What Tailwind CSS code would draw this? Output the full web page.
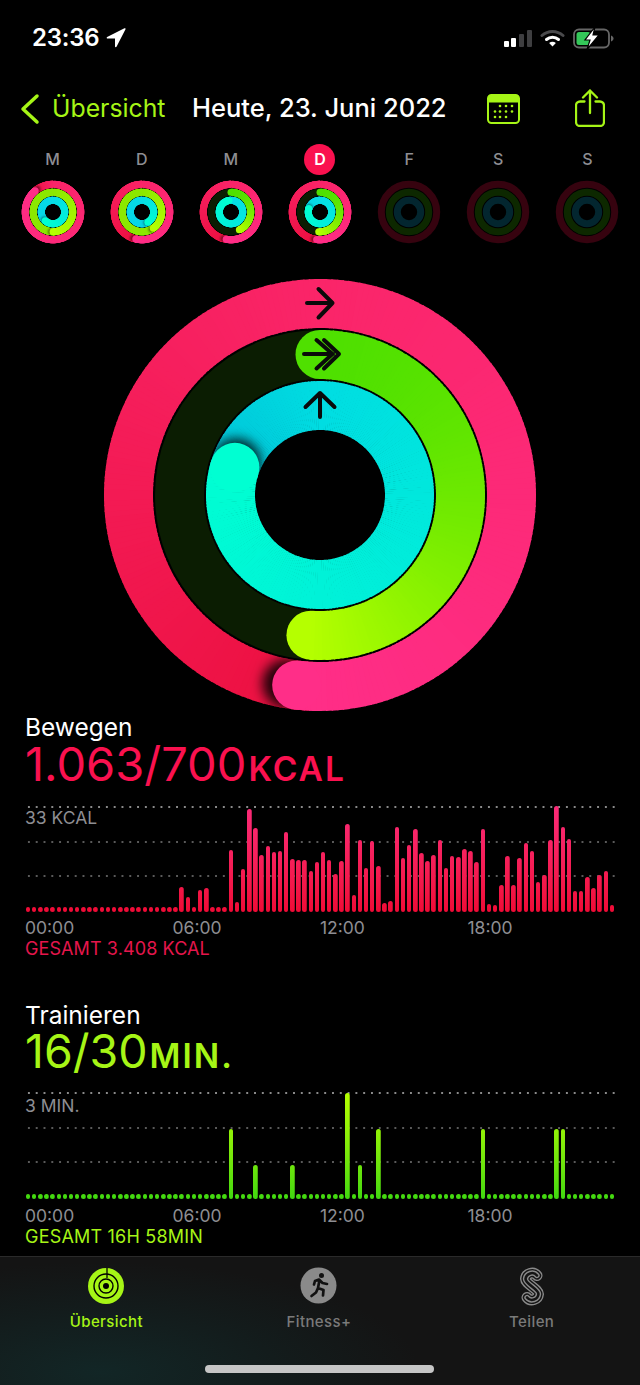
<!DOCTYPE html>
<html lang="de">
<head>
    <meta charset="UTF-8">
    <meta name="viewport" content="width=device-width, initial-scale=1.0">
    <title>Aktivität</title>
    <script src="https://cdn.jsdelivr.net/npm/@tailwindcss/browser@4"></script>
</head>
<body class="bg-black text-white font-['Inter',sans-serif] w-[640px] h-[1385px] overflow-hidden flex flex-col">

    <!-- Statusleiste -->
    <div class="h-[76px] shrink-0 flex items-center justify-between pl-[32px] pr-[26px]">
        <div class="flex items-center gap-[6px]">
            <span class="text-[24px] font-semibold tracking-[-0.2px]">23:36</span>
            <svg width="20" height="20" viewBox="0 0 20 20"><path d="M18.800 1 1.500 9.800h8.300v8.700z" fill="#fff" stroke="#fff" stroke-width="1.600" stroke-linejoin="round"/></svg>
        </div>
        <div class="flex items-center gap-[8px]">
            <div class="flex items-end gap-[2.500px] h-[18px]">
                <div class="w-[5px] h-[6px] rounded-[1px] bg-white"></div>
                <div class="w-[5px] h-[9px] rounded-[1px] bg-white"></div>
                <div class="w-[5.500px] h-[13px] rounded-[1px] bg-[#3e3e40]"></div>
                <div class="w-[5.500px] h-[17px] rounded-[1px] bg-[#3e3e40]"></div>
            </div>
            <svg width="25" height="18" viewBox="0 0 25 18" fill="none" stroke-linecap="round">
                <path d="M2 6.500C8 1 17 1 23 6.500" stroke="#4a4a4c" stroke-width="3"/>
                <path d="M6.500 10.500C10 7.500 15 7.500 18.500 10.500" stroke="#fff" stroke-width="3"/>
                <path d="M12.500 17.500l-3.400-3.600c2-1.500 4.800-1.500 6.800 0z" fill="#fff"/>
            </svg>
            <svg width="41" height="23" viewBox="0 0 41 23">
                <rect x="1" y="2.500" width="35" height="18" rx="5" fill="none" stroke="#666" stroke-width="1.800"/>
                <rect x="3.500" y="5" width="14" height="13" rx="2.500" fill="#34c759"/>
                <path d="M38 8.500v6c1.500-.5 2.500-1.700 2.500-3s-1-2.500-2.500-3z" fill="#666"/>
                <path d="M22 0 12 13h5l-3 9.500L26 8h-6z" fill="#fff" stroke="#000" stroke-width="1.200"/>
            </svg>
        </div>
    </div>

    <!-- Navigation -->
    <div class="h-[64px] shrink-0 flex items-center pl-[20px] pr-[35px] pt-[1px]">
        <svg width="20" height="32" viewBox="0 0 20 32" fill="none" stroke="#a6f516" stroke-width="3.500" stroke-linecap="round" stroke-linejoin="round"><path d="M17 3 3 16l14 13"/></svg>
        <span class="ml-[12px] w-[140px] text-[24.800px] text-[#a6f516]">Übersicht</span>
        <span class="text-[25.500px] font-medium whitespace-nowrap">Heute, 23. Juni 2022</span>
        <svg class="ml-[40px] shrink-0" width="33" height="30" viewBox="0 0 33 30">
            <rect x="1" y="1" width="31" height="28" rx="3.500" fill="none" stroke="#a6f516" stroke-width="2"/>
            <path d="M1 8.500V4.500C1 2.500 2.500 1 4.500 1h24C30.500 1 32 2.500 32 4.500V8.500z" fill="#a6f516"/>
            <g fill="#a6f516">
                <circle cx="13" cy="12" r="1.300"/><circle cx="19" cy="12" r="1.300"/><circle cx="25" cy="12" r="1.300"/>
                <circle cx="8" cy="17.500" r="1.300"/><circle cx="13" cy="17.500" r="1.300"/><circle cx="19" cy="17.500" r="1.300"/><circle cx="25" cy="17.500" r="1.300"/>
                <circle cx="8" cy="23" r="1.300"/><circle cx="13" cy="23" r="1.300"/><circle cx="19" cy="23" r="1.300"/>
            </g>
        </svg>
        <svg class="ml-auto shrink-0 -translate-y-[1px]" width="30" height="38" viewBox="0 0 30 38" fill="none" stroke="#a6f516" stroke-width="2.300" stroke-linecap="round" stroke-linejoin="round">
            <path d="M9.500 12.500H5c-2.200 0-4 1.800-4 4V33c0 2.200 1.800 4 4 4h20c2.200 0 4-1.800 4-4V16.500c0-2.200-1.800-4-4-4h-4.500"/>
            <path d="M15 24V1.500M8 8.500 15 1.500 22 8.500"/>
        </svg>
    </div>

    <!-- Wochentage -->
    <div class="shrink-0 grid grid-cols-7 px-[8px]">
        <div class="h-[38px] flex items-center justify-center text-[16px] font-medium text-[#8e8e93]">M</div>
        <div class="h-[38px] flex items-center justify-center text-[16px] font-medium text-[#8e8e93]">D</div>
        <div class="h-[38px] flex items-center justify-center text-[16px] font-medium text-[#8e8e93]">M</div>
        <div class="h-[38px] flex items-center justify-center"><span class="w-[31px] h-[31px] rounded-full bg-[#fa114f] flex items-center justify-center text-[16px] font-semibold">D</span></div>
        <div class="h-[38px] flex items-center justify-center text-[16px] font-medium text-[#8e8e93]">F</div>
        <div class="h-[38px] flex items-center justify-center text-[16px] font-medium text-[#8e8e93]">S</div>
        <div class="h-[38px] flex items-center justify-center text-[16px] font-medium text-[#8e8e93]">S</div>
    </div>
    <div class="shrink-0 grid grid-cols-7 px-[8px] mt-[2px]" id="week-rings"></div>

    <!-- Grosse Ringe -->
    <div class="shrink-0 flex justify-center mt-[34px]">
        <svg id="big-rings" width="434" height="434" viewBox="-217 -217 434 434">
            <defs>
                <filter id="cap-blur" x="-50%" y="-50%" width="200%" height="200%"><feGaussianBlur stdDeviation="6"/></filter>
                <filter id="cap-blur-small" x="-80%" y="-80%" width="260%" height="260%"><feGaussianBlur stdDeviation="0.8"/></filter>
            </defs>
        </svg>
    </div>

    <!-- Bewegen -->
    <section class="shrink-0 px-[25px]">
        <div class="h-[30px] flex items-center text-[24.500px] leading-[28px]">Bewegen</div>
        <div class="h-[44px] flex items-baseline text-[#fa114f] text-[47px] leading-[44px]">1.063/700<span class="ml-[2px] text-[33.500px] font-semibold tracking-[2px]">KCAL</span></div>
        <div class="relative h-[106px] mt-[20px]" id="move-chart">
            <div class="absolute inset-x-0 top-0 h-[2px] bg-[radial-gradient(circle,#8a8a8a_0.9px,transparent_1px)] bg-[length:7.8px_2px]"></div>
            <div class="absolute inset-x-0 top-[35px] h-[2px] bg-[radial-gradient(circle,#5a5a5a_0.8px,transparent_1px)] bg-[length:7.8px_2px]"></div>
            <div class="absolute inset-x-0 top-[69px] h-[2px] bg-[radial-gradient(circle,#5a5a5a_0.8px,transparent_1px)] bg-[length:7.8px_2px]"></div>
            <span class="absolute left-0 top-[3px] text-[17.500px] leading-[18px] text-[#8e8e93]">33 KCAL</span>
            <div class="absolute inset-0 grid grid-cols-[repeat(96,1fr)] items-end" id="move-bars"></div>
        </div>
        <div class="grid grid-cols-4 h-[26px] mt-[3px] items-center text-[17.500px] leading-[22px] text-[#8e8e93]"><span>00:00</span><span>06:00</span><span>12:00</span><span>18:00</span></div>
        <div class="h-[18px] -mt-[1px] flex items-center text-[18px] leading-[18px] tracking-[0.1px] text-[#e5164c]">GESAMT 3.408 KCAL</div>
    </section>

    <!-- Trainieren -->
    <section class="shrink-0 px-[25px] mt-[41px]">
        <div class="h-[30px] pt-[2px] flex items-center text-[24.500px] leading-[26px]">Trainieren</div>
        <div class="h-[44px] flex items-baseline text-[#a6f516] text-[46.500px] leading-[44px]">16/30<span class="ml-[2px] text-[33.500px] font-semibold tracking-[2px]">MIN.</span></div>
        <div class="relative h-[107px] mt-[19px]" id="exercise-chart">
            <div class="absolute inset-x-0 top-0 h-[2px] bg-[radial-gradient(circle,#8a8a8a_0.9px,transparent_1px)] bg-[length:7.8px_2px]"></div>
            <div class="absolute inset-x-0 top-[35px] h-[2px] bg-[radial-gradient(circle,#5a5a5a_0.8px,transparent_1px)] bg-[length:7.8px_2px]"></div>
            <div class="absolute inset-x-0 top-[69px] h-[2px] bg-[radial-gradient(circle,#5a5a5a_0.8px,transparent_1px)] bg-[length:7.8px_2px]"></div>
            <span class="absolute left-0 top-[5px] text-[17.500px] leading-[18px] text-[#8e8e93]">3 MIN.</span>
            <div class="absolute inset-0 grid grid-cols-[repeat(96,1fr)] items-end" id="exercise-bars"></div>
        </div>
        <div class="grid grid-cols-4 h-[26px] mt-[4px] items-center text-[17.500px] leading-[22px] text-[#8e8e93]"><span>00:00</span><span>06:00</span><span>12:00</span><span>18:00</span></div>
        <div class="h-[18px] -mt-[1px] flex items-center text-[18px] leading-[18px] tracking-[0.2px] text-[#a6f516]">GESAMT 16H 58MIN</div>
    </section>

    <!-- Tab-Leiste -->
    <nav class="relative mt-auto h-[129px] shrink-0 border-t border-[#2a2a2a] bg-[#141414] bg-[radial-gradient(ellipse_320px_110px_at_100px_115px,#122626,#141414)] grid grid-cols-3 pr-[2px]">
        <div class="flex flex-col items-center pt-[10px]">
            <svg width="38" height="38" viewBox="0 0 38 38">
                <circle cx="19" cy="19" r="18" fill="#a6f516"/>
                <g fill="none" stroke="#000" stroke-width="1.400">
                    <circle cx="19" cy="19" r="12"/>
                    <circle cx="19" cy="19" r="7"/>
                </g>
                <circle cx="19" cy="19" r="3" fill="#000"/>
                <path d="M20 1v10" stroke="#000" stroke-width="1.300"/>
            </svg>
            <span class="mt-[6px] text-[15px] font-medium tracking-[0.4px] text-[#a6f516]">Übersicht</span>
        </div>
        <div class="flex flex-col items-center pt-[10px]">
            <svg width="37" height="37" viewBox="0 0 37 37">
                <circle cx="18.500" cy="18.500" r="18" fill="#8a8a8a"/>
                <circle cx="21.500" cy="8.500" r="2.500" fill="#111"/>
                <path d="M14 17.500 15 14l4-1.500 3.500 3.500 4.500 1M19.500 13l-1.500 8 5.500 2-.5 5.500M18 21l-2 4.500-4.500 3.500" fill="none" stroke="#111" stroke-width="2.700" stroke-linecap="round" stroke-linejoin="round"/>
            </svg>
            <span class="mt-[7px] text-[15px] font-medium tracking-[0.4px] text-[#7a7a7a]">Fitness+</span>
        </div>
        <div class="flex flex-col items-center pt-[10px]">
            <svg width="24" height="39" viewBox="0 0 24 39" fill="none" stroke-linecap="round">
                <path d="M17 8.500A6.500 6.500 0 0 0 5.500 12C5.500 17 18.500 22 18.500 27A6.500 6.500 0 0 1 7 30.500" stroke="#8a8a8a" stroke-width="11"/>
                <path d="M17 8.500A6.500 6.500 0 0 0 5.500 12C5.500 17 18.500 22 18.500 27A6.500 6.500 0 0 1 7 30.500" stroke="#141414" stroke-width="8.200"/>
                <path d="M17 8.500A6.500 6.500 0 0 0 5.500 12C5.500 17 18.500 22 18.500 27A6.500 6.500 0 0 1 7 30.500" stroke="#8a8a8a" stroke-width="5.400"/>
                <path d="M17 8.500A6.500 6.500 0 0 0 5.500 12C5.500 17 18.500 22 18.500 27A6.500 6.500 0 0 1 7 30.500" stroke="#141414" stroke-width="2.600"/>
            </svg>
            <span class="mt-[5px] text-[15px] font-medium tracking-[0.4px] text-[#7a7a7a]">Teilen</span>
        </div>
        <!-- Home-Indikator -->
        <div class="absolute left-[205px] top-[108px] w-[229px] h-[8px] rounded-full bg-[#c6c6c6]"></div>
    </nav>

    <script>
        const NS = 'http://www.w3.org/2000/svg';
        const BIG = { red: 191.5, green: 140.5, blue: 89.5, w: 49, blur: 'cap-blur', overlap: 0.4, shadowShift: 3, shadowAlpha: 0.85 };
        const SMALL = { red: 27.7, green: 19.7, blue: 11.7, w: 7, blur: 'cap-blur-small', overlap: 5, shadowShift: 5, shadowAlpha: 0.45 };

        function pt(r, deg) {
            const a = deg * Math.PI / 180;
            return [r * Math.sin(a), -r * Math.cos(a)];
        }
        function mix(c0, c1, t) {
            const p = c => [1, 3, 5].map(i => parseInt(c.slice(i, i + 2), 16));
            const a = p(c0), b = p(c1);
            return 'rgb(' + a.map((v, i) => Math.round(v + (b[i] - v) * t)).join(',') + ')';
        }
        function add(parent, tag, attrs) {
            const el = document.createElementNS(NS, tag);
            for (const k in attrs) el.setAttribute(k, attrs[k]);
            parent.appendChild(el);
            return el;
        }
        // Bogen aus kurzen Stuecken, damit der Farbverlauf dem Kreis folgt
        function arc(g, geo, r, from, to, c0, c1, ease) {
            const n = Math.max(1, Math.ceil((to - from) / 1.5));
            for (let i = 0; i < n; i++) {
                const a0 = from + (to - from) * i / n;
                const a1 = Math.min(to, a0 + (to - from) / n + geo.overlap);
                const [x0, y0] = pt(r, a0), [x1, y1] = pt(r, a1);
                add(g, 'path', {
                    d: `M${x0} ${y0}A${r} ${r} 0 0 1 ${x1} ${y1}`,
                    fill: 'none', stroke: mix(c0, c1, Math.pow(i / n, ease || 1)), 'stroke-width': geo.w
                });
            }
        }
        function cap(g, r, w, deg, color) {
            const [x, y] = pt(r, deg);
            add(g, 'circle', { cx: x, cy: y, r: w / 2, fill: color });
        }
        let clipCount = 0;
        // Ring, der ueber 100 % hinausgeht: Grundring, Schatten, dann die letzte Runde
        function lappedRing(g, geo, r, end, c) {
            const w = geo.w, ro = r + w / 2, ri = r - w / 2;
            arc(g, geo, r, end - 4, 360, c[0], c[1]);
            const [x, y] = pt(r, end + geo.shadowShift);
            const id = 'ring-clip-' + (clipCount++);
            const cp = add(g, 'clipPath', { id });
            add(cp, 'path', {
                d: `M${-ro} 0a${ro} ${ro} 0 1 0 ${2 * ro} 0a${ro} ${ro} 0 1 0 ${-2 * ro} 0z` +
                   `M${-ri} 0a${ri} ${ri} 0 1 1 ${2 * ri} 0a${ri} ${ri} 0 1 1 ${-2 * ri} 0z`,
                'clip-rule': 'evenodd'
            });
            const sg = add(g, 'g', { 'clip-path': `url(#${id})` });
            add(sg, 'circle', { cx: x, cy: y, r: w / 2, fill: '#000', 'fill-opacity': geo.shadowAlpha, filter: `url(#${geo.blur})` });
            arc(g, geo, r, 0, end, c[1], c[2]);
            cap(g, r, w, end, c[2]);
        }
        function trackRing(g, r, w, color) {
            add(g, 'circle', { cx: 0, cy: 0, r, fill: 'none', stroke: color, 'stroke-width': w });
        }

        const RED = ['#ec1040', '#fa2569', '#ff2e88'];
        const LIME = ['#8ce800', '#8ce800', '#b5ff00'];
        const BLUE_BIG = ['#00c4d8', '#00dde2', '#00ffd2'];
        const BLUE_SMALL = ['#08d4e6', '#08dce6', '#00ffd2'];
        const TRACK = '#0b1d02';

        function drawDay(g, geo, d) {
            if (d.dim) {
                trackRing(g, geo.red, geo.w, '#36030f');
                trackRing(g, geo.green, geo.w, '#0d2800');
                trackRing(g, geo.blue, geo.w, '#03262f');
                return;
            }
            lappedRing(g, geo, geo.red, d.red, RED);
            if (d.green > 360) {
                lappedRing(g, geo, geo.green, d.green - 360, LIME);
            } else {
                trackRing(g, geo.green, geo.w, TRACK);
                cap(g, geo.green, geo.w, 0, '#4fe000');
                cap(g, geo.green, geo.w, d.green, '#b5ff00');
                arc(g, geo, geo.green, 0, d.green, '#4fe000', '#b5ff00', 1.7);
            }
            lappedRing(g, geo, geo.blue, d.blue, geo === BIG ? BLUE_BIG : BLUE_SMALL);
        }

        // Wochenringe
        const week = [
            { red: 320, green: 540, blue: 222 },
            { red: 193, green: 505, blue: 150 },
            { red: 190, green: 155, blue: 350 },
            { red: 187, green: 183.7, blue: 288 },
            { dim: true }, { dim: true }, { dim: true }
        ];
        const weekRow = document.getElementById('week-rings');
        week.forEach(d => {
            const cell = document.createElement('div');
            cell.className = 'flex justify-center';
            weekRow.appendChild(cell);
            const svg = add(cell, 'svg', { width: 64, height: 64, viewBox: '-32 -32 64 64' });
            drawDay(svg, SMALL, d);
        });

        // Grosser Ring
        const big = document.getElementById('big-rings');
        drawDay(big, BIG, { red: 187, green: 183.7, blue: 288 });
        const arrows = add(big, 'g', { fill: 'none', stroke: '#0a0a0a', 'stroke-width': 4, 'stroke-linecap': 'round', 'stroke-linejoin': 'round', transform: 'translate(-320 -495.500)' });
        add(arrows, 'path', { d: 'M307 303.500H332.500M318.500 289.500 332.500 303.500 318.500 318' });
        add(arrows, 'path', { d: 'M304 354.500H333M316.500 340.500 332.500 354.500 316.500 369M324 340.500 339 354.500 324 369' });
        add(arrows, 'path', { d: 'M320 417.500V393.500M305.500 407.500 320 393.500 334.500 407.500' });

        // Balkendiagramme
        const moveData = [5,5,5,5,5,5,5,5,5,5,5,5,5,5,5,5,5,5,5,5,5,5,5,5,5,25,15,5,22,24,5,5,5,62,10,43,103,84,57,66,60,61,80,53,52,52,41,50,60,52,38,51,88,17,72,44,71,46,9,11,85,54,67,83,59,51,57,72,44,56,55,63,61,50,83,8,7,27,56,27,54,69,61,30,37,72,106,85,73,21,21,35,24,37,41,7];
        const moveBars = document.getElementById('move-bars');
        moveData.forEach(h => {
            const bar = document.createElement('div');
            bar.className = 'mx-auto w-[4.5px] rounded-full bg-linear-to-t from-[#f00a35] to-[#fb2a78] bg-[length:100%_106px] bg-bottom';
            bar.style.height = h + 'px';
            moveBars.appendChild(bar);
        });
        const exerciseData = { 33: 70, 37: 34, 43: 34, 52: 106, 54: 34, 57: 70, 74: 70, 86: 70, 87: 70 };
        const exerciseBars = document.getElementById('exercise-bars');
        for (let i = 0; i < 96; i++) {
            const bar = document.createElement('div');
            bar.className = 'mx-auto w-[4.5px] rounded-full bg-linear-to-t from-[#3fd90f] to-[#b5ff00] bg-[length:100%_107px] bg-bottom';
            bar.style.height = (exerciseData[i] || 5) + 'px';
            exerciseBars.appendChild(bar);
        }
    </script>
</body>
</html>
